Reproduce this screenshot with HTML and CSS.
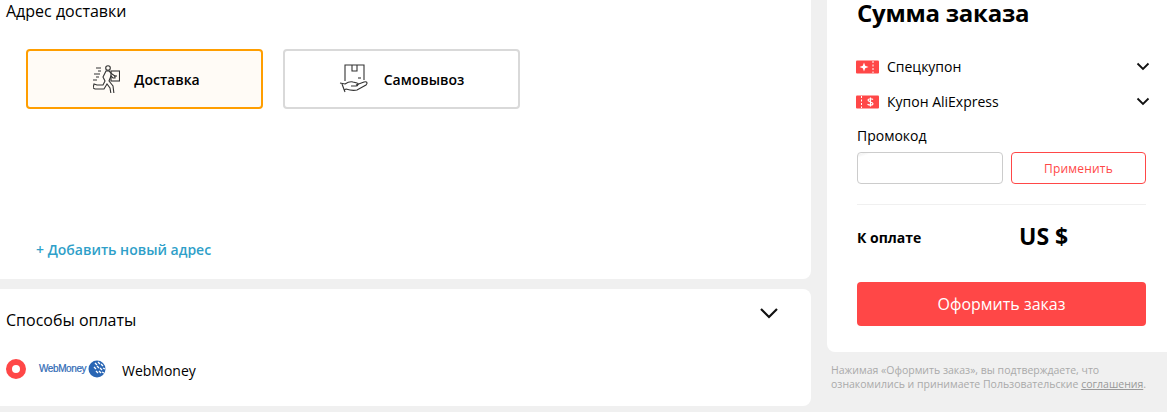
FILE: index.html
```html
<!DOCTYPE html>
<html lang="en">
<head>
    <meta charset="UTF-8">
    <title>Оформление заказа</title>
    <link rel="stylesheet" href="styles.css">
</head>
<body>

    <div class="checkout">
        <div class="main-col">
            <div class="card address-card">
                <h2 class="card-title">Адрес доставки</h2>
                <div class="delivery-options">
                    <div class="option option-active">
                        <svg class="option-icon" width="27" height="28" viewBox="0 0 27 28" fill="none" stroke="#333" stroke-width="1.1">
                            <path d="M3 3h5M5 6h3M1 9h6M3 12h3M0 15h4"/>
                            <circle cx="15" cy="3" r="2.300"/>
                            <path d="M13 6l-3 6 2 4-2 4-6 0-3-1-1 4 2 1 9 0 3-5 3 4 1 6h3l-1-8-4-5 2-5 2 2h2V11l-3-2-3-3z"/>
                            <rect x="18" y="6" width="8.500" height="10"/>
                            <path d="M21 11h3"/>
                        </svg>
                        <span class="option-label">Доставка</span>
                    </div>
                    <div class="option">
                        <svg class="option-icon" width="30" height="30" viewBox="0 0 30 30" fill="none" stroke="#333" stroke-width="1.1">
                            <path d="M6 17V1h19v15"/>
                            <path d="M13 1v6h5V1"/>
                            <path d="M19 14h3"/>
                            <path d="M1 19l5 1c3-2 5-3 8-2l4 1c2 0 1 3-1 3h-5"/>
                            <path d="M17 21l8-3c3-1 4 1 2 3l-9 5c-4 1-8 0-11-1l-2 1"/>
                            <path d="M3 20l3 8"/>
                        </svg>
                        <span class="option-label">Самовывоз</span>
                    </div>
                </div>
                <a class="add-address">+ Добавить новый адрес</a>
            </div>

            <div class="card payment-card">
                <div class="payment-head">
                    <h2 class="card-title">Способы оплаты</h2>
                    <svg class="chevron-big" width="20" height="12" viewBox="0 0 20 12" fill="none" stroke="#111" stroke-width="2.2">
                        <path d="M2 2l8 8 8-8"/>
                    </svg>
                </div>
                <div class="payment-method">
                    <span class="radio"></span>
                    <span class="wm-logo">
                        <span class="wm-text">WebMoney</span>
                        <svg width="18" height="18" viewBox="0 0 18 18">
                            <circle cx="9" cy="9" r="8.500" fill="#2a66b4"/>
                            <path d="M7 3l2 2M10 2l2 2M13 4l2 2M6 7l2 2M9 6l2 2M12 8l2 2M15 8l2 1M8 11l2 2M11 11l2 2M14 12l2 1" stroke="#fff" stroke-width="1.300"/>
                        </svg>
                    </span>
                    <span class="method-name">WebMoney</span>
                </div>
            </div>
        </div>

        <div class="side-col">
            <div class="card summary-card">
                <h1 class="summary-title">Сумма заказа</h1>
                <div class="coupon-row">
                    <svg class="coupon-icon" width="23" height="14" viewBox="0 0 23 14">
                        <rect width="23" height="13" y="0.5" rx="1" fill="#ff4747"/>
                        <path d="M17 1v12" stroke="#fff" stroke-dasharray="2 1.500"/>
                        <path d="M8 2.500l1.200 3.300 3.300 1.200-3.300 1.200-1.200 3.300-1.200-3.300-3.300-1.200 3.300-1.200z" fill="#fff"/>
                    </svg>
                    <span class="coupon-name">Спецкупон</span>
                    <svg class="chevron" width="14" height="9" viewBox="0 0 14 9" fill="none" stroke="#111" stroke-width="1.800">
                        <path d="M1.500 1.500l5.500 5.500 5.500-5.500"/>
                    </svg>
                </div>
                <div class="coupon-row">
                    <svg class="coupon-icon" width="23" height="14" viewBox="0 0 23 14">
                        <rect width="23" height="13" y="0.5" rx="1" fill="#ff4747"/>
                        <path d="M5.500 1v12" stroke="#fff" stroke-dasharray="2 1.500"/>
                        <path d="M17 4.500c-1-1-4.500-1.200-5 .5-.4 2 5 1.500 5 3.800 0 1.700-3.800 1.700-5.500.5M14.500 2.500v9" fill="none" stroke="#fff" stroke-width="1.200"/>
                    </svg>
                    <span class="coupon-name">Купон AliExpress</span>
                    <svg class="chevron" width="14" height="9" viewBox="0 0 14 9" fill="none" stroke="#111" stroke-width="1.800">
                        <path d="M1.500 1.500l5.500 5.500 5.500-5.500"/>
                    </svg>
                </div>
                <div class="promo-label">Промокод</div>
                <div class="promo-row">
                    <input class="promo-input" type="text">
                    <button class="promo-apply">Применить</button>
                </div>
                <div class="total-row">
                    <span class="total-label">К оплате</span>
                    <span class="total-value">US $</span>
                </div>
                <button class="place-order">Оформить заказ</button>
            </div>
            <p class="legal">Нажимая «Оформить заказ», вы подтверждаете, что ознакомились и принимаете Пользовательские <a>соглашения</a>.</p>
        </div>
    </div>

</body>
</html>
```

FILE: styles.css
```css
/* General Styles */
* {
    margin: 0;
    padding: 0;
    box-sizing: border-box;
}

body {
    font-family: "Open Sans", Arial, sans-serif;
    background-color: #f0f0f0;
    color: #000;
    height: 412px;
    overflow: hidden;
}

.checkout {
    display: flex;
    gap: 16px;
}

.main-col {
    width: 811px;
    display: flex;
    flex-direction: column;
    gap: 10px;
}

.side-col {
    width: 340px;
}

.card {
    background-color: white;
    border-radius: 0 0 8px 0;
}

.card-title {
    font-size: 16px;
    font-weight: 400;
    line-height: 22px;
}

/* Address */
.address-card {
    height: 279px;
    padding: 0 6px;
}

.delivery-options {
    display: flex;
    gap: 20px;
    margin: 27px 0 0 20px;
}

.option {
    width: 237px;
    height: 60px;
    border: 2px solid #d9d9d9;
    border-radius: 4px;
    display: flex;
    justify-content: center;
    align-items: center;
    gap: 15px;
}

.option-active {
    border-color: #ff9e00;
    background-color: #fffbf6;
    padding-left: 4px;
}

.option-active .option-icon {
    margin-right: -1px;
}

.option-label {
    font-size: 14px;
    font-weight: 600;
}

.add-address {
    display: block;
    margin: 131px 0 0 30px;
    font-size: 14px;
    font-weight: 600;
    line-height: 20px;
    color: #2f9fc9;
}

/* Payment */
.payment-card {
    height: 117px;
    padding: 0 6px;
    border-radius: 0 8px 8px 0;
}

.payment-head {
    display: flex;
    justify-content: space-between;
    padding: 20px 26px 0 0;
}

.chevron-big {
    margin-top: -2px;
}

.payment-method {
    display: flex;
    align-items: center;
    margin-top: 26px;
}

.radio {
    width: 20px;
    height: 20px;
    border-radius: 50%;
    border: 6px solid #ff4747;
}

.wm-logo {
    display: flex;
    align-items: center;
    gap: 2px;
    margin-left: 13px;
    width: 83px;
}

.wm-text {
    font-family: "Liberation Sans", Arial, sans-serif;
    font-size: 10px;
    letter-spacing: -0.4px;
    color: #2f69b5;
    -webkit-text-stroke: 0.2px #2f69b5;
}

.method-name {
    font-size: 14px;
    padding-top: 4px;
}

/* Summary */
.summary-card {
    height: 352px;
    padding: 0 21px 0 30px;
    border-radius: 0 0 0 8px;
}

.summary-title {
    font-size: 24px;
    font-weight: 700;
    line-height: 26px;
    letter-spacing: -0.25px;
}

.coupon-row {
    display: flex;
    align-items: center;
    height: 35px;
    font-size: 14px;
}

.summary-title + .coupon-row {
    margin-top: 23px;
}

.coupon-icon {
    margin-left: -1px;
}

.coupon-name {
    margin-left: 8px;
}

.chevron {
    margin-left: auto;
    margin-right: -4px;
}

.promo-label {
    font-size: 14px;
    line-height: 20px;
    margin-top: 7px;
}

.promo-row {
    display: flex;
    gap: 8px;
    margin-top: 6px;
}

.promo-input {
    width: 146px;
    height: 32px;
    border: 1px solid #ccc;
    border-radius: 4px;
    background: linear-gradient(160deg, white 4%, #f4f4f4 8%, white 18%) no-repeat 0 0 / 36px 16px;
}

.promo-apply {
    width: 135px;
    height: 32px;
    border: 1px solid #ff4747;
    border-radius: 4px;
    background: white;
    color: #ff4747;
    font-family: inherit;
    font-size: 12px;
    letter-spacing: 0.2px;
}

.total-row {
    display: flex;
    align-items: center;
    height: 65px;
    margin-top: 20px;
    border-top: 1px solid #f0f0f0;
}

.total-label {
    width: 162px;
    font-size: 14px;
    font-weight: 700;
}

.total-value {
    font-size: 23px;
    font-weight: 700;
    padding-bottom: 2px;
}

.place-order {
    display: block;
    width: 100%;
    height: 44px;
    margin-top: 13px;
    border: none;
    border-radius: 4px;
    background-color: #ff4747;
    color: white;
    font-family: inherit;
    font-size: 16px;
}

.legal {
    width: 320px;
    margin: 11px 0 0 4px;
    font-size: 10.500px;
    line-height: 14px;
    color: #aaa;
}

.legal a {
    color: #999;
    text-decoration: underline;
}
```
